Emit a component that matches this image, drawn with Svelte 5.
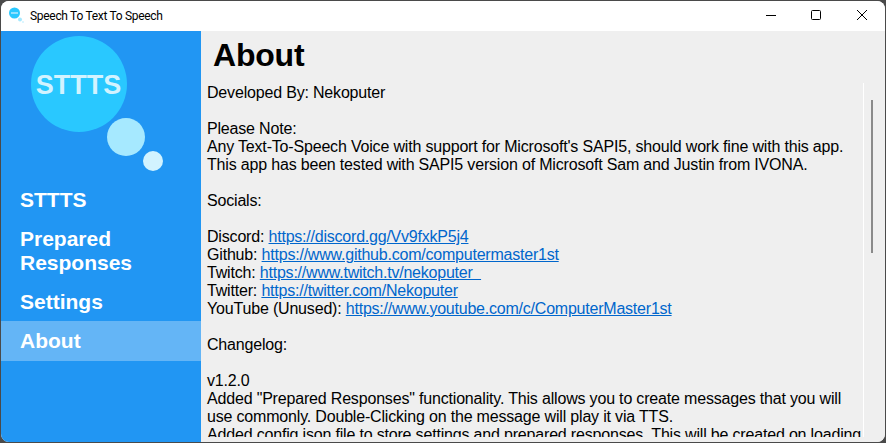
<script lang="ts">
  const navItems = [
    { label: "STTTS" },
    { label: "Prepared Responses" },
    { label: "Settings" },
    { label: "About", active: true }
  ];
</script>

<div class="window">
  <header class="titlebar">
    <svg class="app-icon" width="16" height="16" viewBox="0 0 16 16">
      <circle cx="5.5" cy="6" r="5.5" fill="#29c8ff" />
      <rect x="2" y="5" width="7" height="2" fill="#8fe0ff" />
      <circle cx="11" cy="12.5" r="2" fill="#a6e9ff" />
      <circle cx="14" cy="15" r="1" fill="#d2f3ff" />
    </svg>
    <span class="title">Speech To Text To Speech</span>
    <div class="controls">
      <svg width="46" height="30" viewBox="0 0 46 30"><path d="M19 14.5h10" stroke="#000" fill="none" /></svg>
      <svg width="46" height="30" viewBox="0 0 46 30"><rect x="18.5" y="9.5" width="9" height="9" rx="1" stroke="#000" fill="none" /></svg>
      <svg width="46" height="30" viewBox="0 0 46 30"><path d="M18 9l10 10M28 9l-10 10" stroke="#000" fill="none" /></svg>
    </div>
  </header>

  <div class="body">
    <aside class="sidebar">
      <svg class="logo" width="140" height="142" viewBox="0 0 140 142">
        <circle cx="48" cy="48" r="48" fill="#29c8ff" />
        <text x="47.5" y="58" text-anchor="middle" class="logo-text">STTTS</text>
        <circle cx="95" cy="101" r="19" fill="#a6e9ff" />
        <circle cx="122" cy="125" r="10" fill="#d2f3ff" />
      </svg>
      <nav>
        {#each navItems as item}
          <div class="nav-item" class:active={item.active}>{item.label}</div>
        {/each}
      </nav>
    </aside>

    <main class="content">
      <h1>About</h1>
      <div class="scroll">
        <div class="text">
          <p>Developed By: Nekoputer</p>
          <p>Please Note:<br />
          Any Text-To-Speech Voice with support for Microsoft's SAPI5, should work fine with this app.<br />
          This app has been tested with SAPI5 version of Microsoft Sam and Justin from IVONA.</p>
          <p>Socials:</p>
          <p>Discord: <a href="#discord">https://discord.gg/Vv9fxkP5j4</a><br />
          Github: <a href="#github">https://www.github.com/computermaster1st</a><br />
          Twitch: <a href="#twitch">https://www.twitch.tv/nekoputer&nbsp;&nbsp;</a><br />
          Twitter: <a href="#twitter">https://twitter.com/Nekoputer</a><br />
          YouTube (Unused): <a href="#youtube">https://www.youtube.com/c/ComputerMaster1st</a></p>
          <p>Changelog:</p>
          <p>v1.2.0<br />
          Added "Prepared Responses" functionality. This allows you to create messages that you will use commonly. Double-Clicking on the message will play it via TTS.<br />
          Added config.json file to store settings and prepared responses. This will be created on loading</p>
        </div>
        <div class="scrollbar"><div class="thumb"></div></div>
      </div>
    </main>
  </div>
</div>

<style>
  :global(body) {
    margin: 0;
    background: #4a4a4a;
    overflow: hidden;
  }
  .window {
    width: 884px;
    height: 441px;
    margin-left: 1px;
    margin-top: 1px;
    border-radius: 8px;
    overflow: hidden;
    display: flex;
    flex-direction: column;
    background: #fff;
    font-family: "Liberation Sans", Arial, sans-serif;
  }
  .titlebar {
    height: 30px;
    flex: none;
    display: flex;
    align-items: center;
    background: #fff;
  }
  .app-icon {
    margin-left: 8px;
    margin-bottom: 3px;
  }
  .title {
    margin-left: 5px;
    font-family: Roboto, "Noto Sans", sans-serif;
    font-size: 12px;
    letter-spacing: -0.3px;
    color: #000;
  }
  .controls {
    margin-left: auto;
    display: flex;
  }
  .controls svg {
    display: block;
  }
  .body {
    flex: 1;
    min-height: 0;
    display: flex;
  }
  .sidebar {
    width: 200px;
    flex: none;
    background: #2196f3;
    display: flex;
    flex-direction: column;
  }
  .logo {
    display: block;
    margin: 5px 0 0 30px;
    flex: none;
  }
  .logo-text {
    font-family: "Liberation Sans", Arial, sans-serif;
    font-weight: 700;
    font-size: 27px;
    fill: #d2f3ff;
  }
  nav {
    margin-top: 3px;
  }
  .nav-item {
    padding: 7.33px 19px;
    font-size: 21px;
    font-weight: 700;
    line-height: 24px;
    color: #fff;
  }
  .nav-item.active {
    padding-top: 8px;
    padding-bottom: 8px;
    background: #64b5f6;
  }
  .content {
    flex: 1;
    min-width: 0;
    background: #efefef;
    display: flex;
    flex-direction: column;
  }
  h1 {
    margin: 6px 0 0 12px;
    font-size: 32px;
    line-height: 37px;
    font-weight: 700;
    letter-spacing: -0.2px;
    color: #000;
  }
  .scroll {
    flex: 1;
    min-height: 0;
    display: flex;
    margin-top: 9px;
    margin-bottom: 5px;
    overflow: hidden;
  }
  .text {
    width: 656px;
    flex: none;
    padding: 1px 0 0 6px;
    font-size: 16px;
    letter-spacing: -0.18px;
    color: #000;
  }
  p {
    margin: 0 0 18px;
  }
  a {
    color: #0066cc;
    letter-spacing: -0.22px;
    text-decoration: underline;
  }
  .scrollbar {
    border-left: 1px solid #fff;
    width: 21px;
    flex: none;
    padding-left: 7px;
    box-sizing: border-box;
  }
  .thumb {
    width: 2px;
    height: 153px;
    margin-top: 17px;
    background: #8a8a8a;
  }
</style>
